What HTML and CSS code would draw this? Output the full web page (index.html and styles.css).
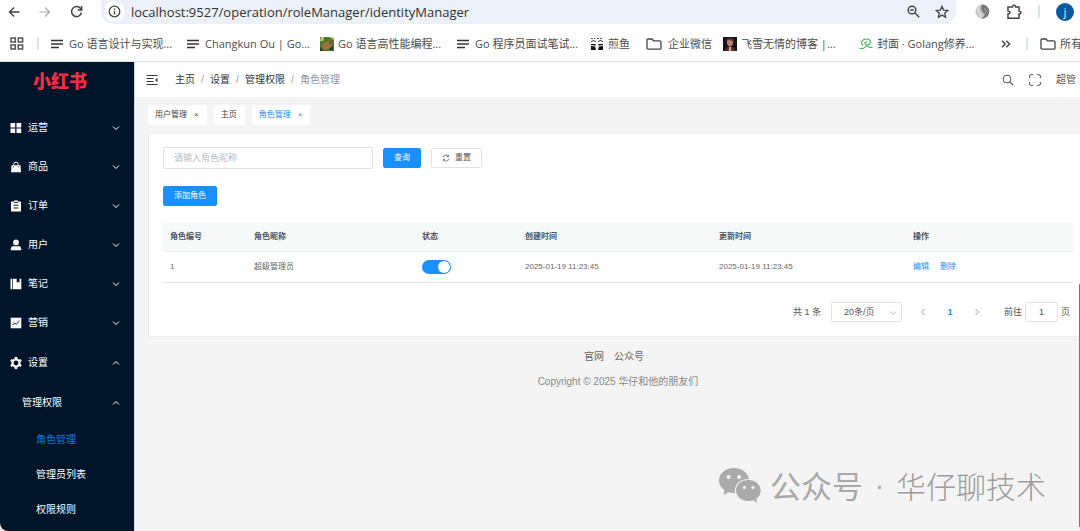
FILE: index.html
```html
<!DOCTYPE html>
<html lang="zh-CN">
<head>
<meta charset="utf-8">
<meta name="viewport" content="width=device-width, initial-scale=1">
<title>角色管理</title>
<link rel="stylesheet" href="styles.css">
</head>
<body>
<svg class="defs" width="0" height="0" aria-hidden="true">
  <symbol id="lines" viewBox="0 0 12 10"><path d="M0 1.5h12M0 5h12M0 8.5h8" stroke="#333" stroke-width="1.6" fill="none"/></symbol>
  <symbol id="folder" viewBox="0 0 16 12"><path d="M1 2.2Q1 1 2.2 1H6l1.6 1.8h6.2q1.2 0 1.2 1.2v6q0 1.2-1.2 1.2H2.2Q1 11.200 1 10z" stroke="#444" stroke-width="1.3" fill="none"/></symbol>
  <symbol id="down" viewBox="0 0 8 8"><path d="M1 2.500l3 3 3-3" stroke="currentColor" stroke-width="1" fill="none"/></symbol>
  <symbol id="up" viewBox="0 0 8 8"><path d="M1 5.500l3-3 3 3" stroke="currentColor" stroke-width="1" fill="none"/></symbol>
</svg>

<header class="browser">
  <div class="toolbar">
    <button class="plain" aria-label="后退"><svg width="12" height="12" viewBox="0 0 12 12"><path d="M11.500 6H1.500M6 1.500L1.500 6 6 10.500" stroke="#444" stroke-width="1.400" fill="none"/></svg></button>
    <button class="plain" aria-label="前进"><svg width="12" height="12" viewBox="0 0 12 12"><path d="M.5 6h10M6 1.500L10.500 6 6 10.500" stroke="#aaa" stroke-width="1.200" fill="none"/></svg></button>
    <button class="plain" aria-label="刷新"><svg width="13" height="13" viewBox="0 0 13 13"><path d="M11 4.200A5 5 0 1 0 11.500 7.500M11.700 1v4H7.700" stroke="#444" stroke-width="1.500" fill="none"/></svg></button>
    <div class="omnibox">
      <span class="info"><svg width="13" height="13" viewBox="0 0 13 13"><circle cx="6.500" cy="6.500" r="5.300" fill="none" stroke="#444" stroke-width="1.300"/><path d="M6.500 6v3.400M6.500 3.500v1.400" stroke="#444" stroke-width="1.300"/></svg></span>
      <input class="url" aria-label="地址" value="localhost:9527/operation/roleManager/identityManager">
      <button class="plain" aria-label="缩放"><svg width="13" height="13" viewBox="0 0 13 13"><circle cx="5" cy="5" r="3.800" fill="none" stroke="#444" stroke-width="1.400"/><path d="M3.200 5h3.600M7.800 7.800l4.400 4.400" stroke="#444" stroke-width="1.400"/></svg></button>
      <button class="plain" aria-label="收藏"><svg width="14" height="14" viewBox="0 0 14 14"><path d="M7 1.400l1.700 3.700 4 .4-3 2.700.9 4L7 10.100l-3.600 2.100.9-4-3-2.700 4-.4z" fill="none" stroke="#444" stroke-width="1.300"/></svg></button>
    </div>
    <div class="extensions">
      <svg width="15" height="15" viewBox="0 0 15 15"><circle cx="7.500" cy="7.500" r="7" fill="#c6c6c6"/><path d="M7 .5a7 7 0 1 1-1 13.900Q11 12 9 9.500 4.500 6 7 .5" fill="#777"/><path d="M3 3q-1 3 1 5t2 5" stroke="#eee" fill="none"/><path d="M9 4l3 3-3 4" stroke="#aaa" fill="none"/></svg>
      <svg width="16" height="16" viewBox="0 0 16 16"><path d="M2 3h4.500q.1-2 1.500-2t1.500 2H13v4q2 .2 2 1.500T13 10v4.200H2V10q2-.1 2-1.500T2 7z" fill="none" stroke="#444" stroke-width="1.500"/></svg>
      <i class="divider"></i>
      <button class="avatar" aria-label="账号">j</button>
    </div>
  </div>
  <nav class="bookmarks" aria-label="书签">
    <button class="plain" aria-label="应用"><svg width="14" height="13" viewBox="0 0 14 13"><path d="M1 1h4.300v4H1zM8.300 1h4.300v4H8.300zM1 8h4.300v4H1zM8.300 8h4.300v4H8.300z" stroke="#555" stroke-width="1.500" fill="none"/></svg></button>
    <i class="divider"></i>
    <a href="#"><svg width="12" height="10"><use href="#lines"/></svg>Go 语言设计与实现...</a>
    <a href="#"><svg width="12" height="10"><use href="#lines"/></svg>Changkun Ou | Go...</a>
    <a class="tight" href="#"><svg width="14" height="14" viewBox="0 0 14 14"><path d="M0 0h14v14H0z" fill="#527331"/><path d="M1 0h3l-1 4H0zM9 0h5v3z" fill="#c8cd65"/><path d="M2 9q1-4 5-4l1-3 2 3 3 1-2 4-4 3H3z" fill="#9b6f3e"/><path d="M0 10l4 4H0zM9 12l4-3v5z" fill="#293d20"/><circle cx="10" cy="6" r=".7" fill="#281d12"/></svg>Go 语言高性能编程...</a>
    <a href="#"><svg width="12" height="10"><use href="#lines"/></svg>Go 程序员面试笔试...</a>
    <a class="tight" href="#"><svg width="14" height="14" viewBox="0 0 14 14"><path d="M1 1.500h4M7 1.500h6" stroke="#555" stroke-dasharray="2 1"/><path d="M1 4.500l3-1 2 1.500M8 5l2-1.500 3 1" stroke="#333" fill="none"/><path d="M1 7h5l-1 2 1 4H1zM8 7h5v6H8l1-4z" fill="#111"/><path d="M1 8.500l4 .5M9 9l4-.5" stroke="#eee"/></svg>煎鱼</a>
    <a href="#"><svg width="16" height="12"><use href="#folder"/></svg>企业微信</a>
    <a class="tight" href="#"><svg width="14" height="14" viewBox="0 0 14 14"><path d="M0 0h14v14H0z" fill="#171419"/><path d="M4 3q3-3 6 0v4q-3 5-6 0z" fill="#bc8174"/><path d="M3 5q2-4 8 0l-1-4H4z" fill="#55323a"/><path d="M2 14l3-5 2 2 2-2 4 5z" fill="#642630"/><path d="M6 10h2v4H6z" fill="#bbb"/></svg>飞雪无情的博客 |...</a>
    <a class="tight" href="#"><svg width="14" height="12" viewBox="0 0 14 12"><path d="M4.500 7Q2 6.500 2.500 4 4 .8 7.500 1 11.500 1.200 11.500 4 11 7 8 7 5.500 6.500 6 4.500 7 3 8.500 4.500M.5 10.500h4Q6 8 8 8q2 0 2.500 1.500h3" fill="none" stroke="#4bb955" stroke-width="1.200"/></svg>封面 · Golang修养...</a>
    <button class="plain" aria-label="更多"><svg width="10" height="8" viewBox="0 0 10 8"><path d="M1 .8L4.200 4 1 7.200M5.300.8L8.500 4 5.300 7.200" stroke="#444" stroke-width="1.400" fill="none"/></svg></button>
    <i class="divider"></i>
    <a class="tight" href="#"><svg width="16" height="12"><use href="#folder"/></svg>所有</a>
  </nav>
</header>

<div class="app">
  <aside class="sidebar">
    <div class="logo">小红书</div>
    <nav class="menu" aria-label="主菜单">
      <button><svg width="12" height="12" viewBox="0 0 12 12"><path d="M.5 1h4.700v4.400H.5zM6.500 1h4.700v4.400H6.500zM.5 6.600h4.700V11H.5zM6.500 6.600h4.700V11H6.500z" fill="#fff"/></svg>运营<svg class="arrow" width="8" height="8"><use href="#down"/></svg></button>
      <button><svg width="12" height="12" viewBox="0 0 12 12"><path d="M1.500 4.200h9l.5 7H1z" fill="#fff"/><path d="M3.700 6V3.500q0-2.300 2.300-2.300t2.300 2.300V6" stroke="#fff" fill="none"/><path d="M3.700 5v1.500M8.300 5v1.500" stroke="#001529" stroke-width=".7"/></svg>商品<svg class="arrow" width="8" height="8"><use href="#down"/></svg></button>
      <button><svg width="12" height="12" viewBox="0 0 12 12"><path d="M1 1.500H4V.5h4v1h3v10H1z" fill="#fff"/><path d="M3.500 5.200h5M3.500 8h5M4 2.500h4" stroke="#001529" stroke-width=".9"/></svg>订单<svg class="arrow" width="8" height="8"><use href="#down"/></svg></button>
      <button><svg width="12" height="12" viewBox="0 0 12 12"><circle cx="6" cy="3.400" r="2.900" fill="#fff"/><path d="M.8 11.300V9.700q0-2.500 2.500-2.500h5.400q2.500 0 2.500 2.500v1.600z" fill="#fff"/></svg>用户<svg class="arrow" width="8" height="8"><use href="#down"/></svg></button>
      <button><svg width="12" height="12" viewBox="0 0 12 12"><path d="M.5.700h1.800v10.600H.5zM3 .7h3.700v4l1.400-1 1.400 1v-4h1.800v10.600H3z" fill="#fff"/></svg>笔记<svg class="arrow" width="8" height="8"><use href="#down"/></svg></button>
      <button><svg width="12" height="12" viewBox="0 0 12 12"><path d="M.7.700h10.600v10.600H.7z" fill="#fff"/><path d="M2.500 8l2-2 1.700 1.200L9.500 4" stroke="#001529" fill="none"/></svg>营销<svg class="arrow" width="8" height="8"><use href="#down"/></svg></button>
      <button class="open" aria-expanded="true"><svg width="12" height="12" viewBox="0 0 12 12"><circle cx="6" cy="6" r="3.500" fill="none" stroke="#fff" stroke-width="2.200"/><path d="M6 0v2M6 10v2M.8 3l1.700 1M9.500 8l1.700 1M.8 9l1.700-1M9.500 4l1.700-1" stroke="#fff" stroke-width="2.600"/></svg>设置<svg class="arrow" width="8" height="8"><use href="#up"/></svg></button>
      <button class="nested" aria-expanded="true">管理权限<svg class="arrow" width="8" height="8"><use href="#up"/></svg></button>
      <a class="current" href="#">角色管理</a>
      <a href="#">管理员列表</a>
      <a href="#">权限规则</a>
    </nav>
  </aside>

  <div class="content">
    <header class="topbar">
      <button class="plain" aria-label="收起菜单"><svg width="12" height="12" viewBox="0 0 12 12"><path d="M.5 1.500h11M.5 4.500h7M.5 7.500h7M.5 10.500h11" stroke="#333" stroke-width="1.100"/><path d="M11.500 3.800v4.400L9 6z" fill="#333"/></svg></button>
      <nav class="crumbs" aria-label="面包屑"><a href="#">主页</a><i>/</i><a href="#">设置</a><i>/</i><a href="#">管理权限</a><i>/</i><span>角色管理</span></nav>
      <div class="tools">
        <button class="plain" aria-label="搜索"><svg width="12" height="12" viewBox="0 0 12 12"><circle cx="5" cy="5" r="3.900" fill="none" stroke="#555"/><path d="M7.800 7.800l3.500 3.500" stroke="#555" stroke-width="1.200"/></svg></button>
        <button class="plain" aria-label="全屏"><svg width="12" height="12" viewBox="0 0 12 12"><path d="M.6 4V2Q.6.700 2 .7h2M8 .7h2q1.400 0 1.400 1.300v2M11.400 8v2q0 1.300-1.400 1.300H8M4 11.300H2Q.6 11.300.6 10V8" stroke="#555" fill="none"/></svg></button>
        <button class="plain">超管</button>
      </div>
    </header>

    <div class="page">
      <nav class="tabs" aria-label="标签页">
        <a href="#">用户管理<b>×</b></a>
        <a href="#">主页</a>
        <a class="active" href="#">角色管理<b>×</b></a>
      </nav>

      <main class="card">
        <form class="search">
          <input class="field" aria-label="角色昵称" placeholder="请输入角色昵称">
          <button type="button" class="btn primary">查询</button>
          <button type="button" class="btn"><svg width="8" height="8" viewBox="0 0 8 8"><path d="M1 3.500a3 3 0 0 1 5.500-1.200M7 4.500a3 3 0 0 1-5.500 1.200M6.700.8v1.700H5M1.300 7.200V5.500H3" stroke="#666" stroke-width=".8" fill="none"/></svg>重置</button>
        </form>
        <button type="button" class="btn primary add">添加角色</button>
        <table class="roles">
          <colgroup><col class="c-id"><col class="c-name"><col class="c-state"><col class="c-time"><col class="c-time"><col></colgroup>
          <thead><tr><th>角色编号</th><th>角色昵称</th><th>状态</th><th>创建时间</th><th>更新时间</th><th>操作</th></tr></thead>
          <tbody><tr>
            <td>1</td><td>超级管理员</td>
            <td><input class="switch" type="checkbox" role="switch" aria-label="状态" checked></td>
            <td>2025-01-19 11:23:45</td><td>2025-01-19 11:23:45</td>
            <td><div class="actions"><a href="#">编辑</a><a href="#">删除</a></div></td>
          </tr></tbody>
        </table>
        <div class="pager">
          <span>共 1 条</span>
          <span class="size"><select aria-label="每页条数"><option>20条/页</option></select><svg width="8" height="8"><use href="#down"/></svg></span>
          <button class="plain step" aria-label="上一页"><svg width="6" height="8" viewBox="0 0 6 8"><path d="M4.500 1l-3 3 3 3" stroke="#999" fill="none"/></svg></button>
          <button class="plain number">1</button>
          <button class="plain step" aria-label="下一页"><svg width="6" height="8" viewBox="0 0 6 8"><path d="M1.500 1l3 3-3 3" stroke="#999" fill="none"/></svg></button>
          <label class="jump">前往<input value="1">页</label>
        </div>
      </main>

      <footer class="footer">
        <div class="links"><a href="#">官网</a><a href="#">公众号</a></div>
        <p>Copyright © 2025 华仔和他的朋友们</p>
      </footer>
    </div>
    <div class="watermark">
      <svg width="42" height="35" viewBox="0 0 42 35"><path d="M15 0C6.500 0 0 5.500 0 12.500c0 4 2.200 7.400 5.600 9.700L4.500 27l5-2.800c1.800.6 3.600.8 5.500.8h1C14.500 17 21 11 30 11 28.800 4.500 22.500 0 15 0z" fill="#aaa"/><path d="M29.500 12C22 12 17 16.800 17 22.500S22.300 33 29.500 33c1.700 0 3.200-.3 4.600-.7l4.200 2.500-1.100-3.900c2.800-2 4.500-4.900 4.500-8.400C41.700 16.800 36.500 12 29.500 12z" fill="#aaa"/><g fill="#f5f5f5"><circle cx="9.700" cy="9" r="2"/><circle cx="20" cy="9" r="2"/><circle cx="25.500" cy="19.500" r="1.600"/><circle cx="34" cy="19.500" r="1.600"/></g></svg>
      <span class="kind">公众号</span><span class="dot">·</span><span class="author">华仔聊技术</span>
    </div>
    <i class="scrollbar"></i>
  </div>
</div>
</body>
</html>
```
FILE: styles.css
```css
* { box-sizing: border-box; }
html, body { height: 100%; }
body {
  margin: 0;
  display: flex;
  flex-direction: column;
  background: #fff;
  color: #555;
  font: 10px/16px "Liberation Sans", "Noto Sans CJK SC", sans-serif;
}
a { color: inherit; text-decoration: none; }
button, input, select { font: inherit; color: inherit; }
button { cursor: pointer; }
svg { flex: none; display: block; }
i, b { font-style: normal; font-weight: 400; }
.defs { position: absolute; }
.plain { display: flex; align-items: center; justify-content: center; padding: 0; border: 0; background: none; }

/* browser chrome */
.browser {
  flex: none;
  border-bottom: 1px solid #dfe5e2;
  font-family: "Open Sans", "Noto Sans CJK SC", sans-serif;
  overflow: hidden;
}
.toolbar { display: flex; align-items: center; gap: 19px; height: 25px; padding: 0 6px 2px 8px; }
.omnibox {
  flex: 1;
  display: flex;
  align-items: center;
  gap: 15px;
  height: 25px;
  margin-left: -1px;
  padding: 0 7px 0 3px;
  border-radius: 0 0 12px 12px;
  background: #ebf0f9;
}
.info { display: grid; place-items: center; width: 21px; height: 21px; border-radius: 50%; background: #fff; }
.url {
  flex: 1;
  min-width: 0;
  margin-left: -9px;
  padding: 0;
  border: 0;
  background: none;
  color: #333;
  font-size: 13px;
  line-height: 18px;
}
.extensions { display: flex; align-items: center; gap: 16px; }
.divider { width: 2px; height: 13px; background: #d5e4f6; }
.avatar { width: 18px; height: 18px; padding: 0; border: 0; border-radius: 50%; background: #0b5a9e; color: #fff; font-size: 10px; line-height: 16px; }
.bookmarks {
  display: grid;
  grid-template-columns: 27px 14px 136px 133px 137px 133px 56px 77px 136px 142px 25px 14px 1fr;
  align-items: center;
  justify-items: start;
  height: 36px;
  padding: 1px 0 0 10px;
  color: #4c4c4c;
  font-size: 11px;
}
.bookmarks a { display: flex; align-items: center; gap: 6px; white-space: nowrap; }
.bookmarks .tight { gap: 4px; }

/* application shell */
.app { flex: 1; display: flex; min-height: 0; }
.sidebar { flex: none; width: 134px; border-bottom-left-radius: 8px; background: #001529; color: #fff; overflow: hidden; }
.logo { height: 46px; padding-right: 14px; color: #fb2a45; font-size: 18px; font-weight: 900; line-height: 40px; text-align: center; }
.menu button, .menu a { display: flex; align-items: center; gap: 6px; width: 100%; height: 39px; padding: 0 14px 0 10px; border: 0; background: none; }
.menu .open { height: 40px; margin-top: 1px; }
.menu .nested { padding-left: 22px; }
.menu a { height: 35px; padding-left: 36px; }
.menu .current { color: #1178dd; }
.menu .arrow { margin-left: auto; }

.content { position: relative; flex: 1; min-width: 0; display: flex; flex-direction: column; border-left: 1px solid #d5d9dc; background: #f4f4f4; }
.topbar { flex: none; display: flex; align-items: center; gap: 17px; height: 35px; padding: 0 4px 0 11px; background: #fff; }
.crumbs { display: flex; color: #333; }
.crumbs i { width: 15px; color: #999; text-align: center; }
.crumbs span { color: #8e95a3; }
.tools { display: flex; gap: 15px; margin-left: auto; }
.page { padding: 8px 0 0 13px; }
.tabs { display: flex; gap: 7px; font-size: 8px; color: #444; }
.tabs a { display: flex; gap: 7px; padding: 2px 8px 2px 7px; border-radius: 2px; background: #fff; }
.tabs .active { color: #1890ff; }

/* role list */
.card { margin-top: 8px; padding: 13px 7px 14px 14px; border: 1px solid #ebeeef; border-right: 0; background: #fff; }
.search { display: flex; align-items: center; gap: 10px; }
.field { width: 210px; height: 22px; padding: 0 10px; border: 1px solid #dfe2e6; border-radius: 2px; font-size: 9px; }
.field::placeholder { color: #b8bcc3; opacity: 1; }
.btn { display: flex; align-items: center; gap: 5px; height: 20px; padding: 0 10px; border: 1px solid #dfe2e6; border-radius: 2px; background: #fff; font-size: 8px; line-height: 18px; }
.primary { border-color: #1890ff; background: #1890ff; color: #fff; }
.add { margin-top: 17px; }
.roles { width: 100%; margin-top: 17px; border-collapse: collapse; table-layout: fixed; font-size: 8px; }
.c-id { width: 84px; }
.c-name { width: 168px; }
.c-state { width: 103px; }
.c-time { width: 194px; }
.roles th, .roles td { padding: 0 7px; border-bottom: 1px solid #e3e5e9; text-align: left; }
.roles th { height: 28px; border-color: #edf0f2; background: #f7f9f9; color: #4b5260; font-weight: 700; }
.roles td { height: 31px; color: #666; }
.switch { appearance: none; display: block; width: 29px; height: 14px; margin: 0; padding: 1px; border-radius: 7px; background: #dcdfe6; }
.switch::before { content: ""; display: block; width: 12px; height: 12px; border-radius: 50%; background: #fff; }
.switch:checked { background: #1890ff; }
.switch:checked::before { margin-left: auto; }
.actions { display: flex; gap: 11px; color: #1890ff; }
.pager { display: flex; align-items: center; justify-content: flex-end; margin-top: 19px; padding-right: 3px; font-size: 9px; }
.size { position: relative; margin: 0 16px 0 10px; color: #555; }
.size select { appearance: none; display: block; width: 71px; height: 20px; padding: 0 12px; border: 1px solid #e0e3e8; border-radius: 2px; background: #fff; }
.size svg { position: absolute; top: 7px; right: 5px; color: #b5b8bf; }
.step { width: 10px; height: 20px; }
.number { width: 44px; color: #1890ff; font-weight: 700; }
.jump { display: flex; align-items: center; gap: 3px; margin-left: 22px; }
.jump input { width: 33px; height: 20px; padding: 0; border: 1px solid #e0e3e8; border-radius: 2px; text-align: center; }

.footer { margin-top: 12px; text-align: center; color: #666; }
.footer p { margin: 9px 0 0; padding-left: 8px; color: #888; }
.links { display: flex; justify-content: center; gap: 10px; }

.watermark { position: absolute; right: 34px; bottom: 24px; display: flex; align-items: center; color: #a9a9a9; font: 30px/44px "Noto Sans CJK SC", sans-serif; white-space: nowrap; }
.watermark svg { margin-right: 9px; }
.watermark .kind { font-size: 31px; }
.watermark .dot { width: 33px; font-family: "Liberation Sans", sans-serif; text-align: center; }
.watermark .author { color: #9c9c9c; font-weight: 300; }
.scrollbar { position: absolute; right: 0; top: 222px; bottom: 4px; width: 1px; background: #777; }
```
